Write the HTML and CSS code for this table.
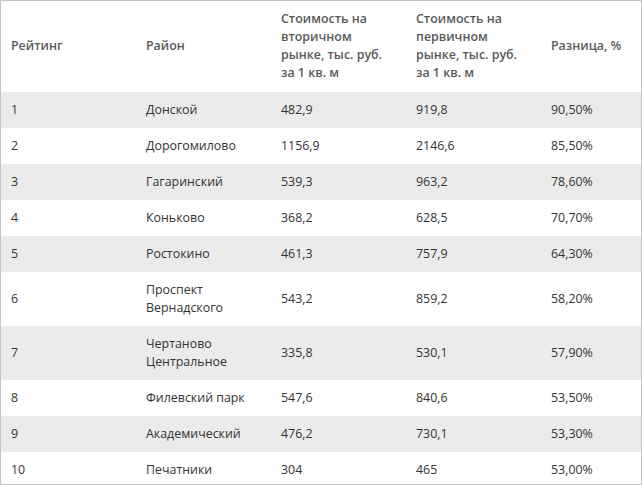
FILE: index.html
```html
<!DOCTYPE html>
<html lang="ru">
<head>
<meta charset="utf-8">
<link rel="stylesheet" href="styles.css">
</head>
<body>
<div class="frame">
<table class="rating">
<colgroup><col class="c"><col class="c"><col class="c"><col class="c"><col class="c"></colgroup>
<thead>
<tr><th>Рейтинг</th><th>Район</th><th>Стоимость на вторичном рынке, тыс. руб. за 1 кв. м</th><th>Стоимость на первичном рынке, тыс. руб. за 1 кв. м</th><th>Разница, %</th></tr>
</thead>
<tbody>
<tr><td>1</td><td>Донской</td><td>482,9</td><td>919,8</td><td>90,50%</td></tr>
<tr><td>2</td><td>Дорогомилово</td><td>1156,9</td><td>2146,6</td><td>85,50%</td></tr>
<tr><td>3</td><td>Гагаринский</td><td>539,3</td><td>963,2</td><td>78,60%</td></tr>
<tr><td>4</td><td>Коньково</td><td>368,2</td><td>628,5</td><td>70,70%</td></tr>
<tr><td>5</td><td>Ростокино</td><td>461,3</td><td>757,9</td><td>64,30%</td></tr>
<tr><td>6</td><td>Проспект Вернадского</td><td>543,2</td><td>859,2</td><td>58,20%</td></tr>
<tr><td>7</td><td>Чертаново Центральное</td><td>335,8</td><td>530,1</td><td>57,90%</td></tr>
<tr><td>8</td><td>Филевский парк</td><td>547,6</td><td>840,6</td><td>53,50%</td></tr>
<tr><td>9</td><td>Академический</td><td>476,2</td><td>730,1</td><td>53,30%</td></tr>
<tr><td>10</td><td>Печатники</td><td>304</td><td>465</td><td>53,00%</td></tr>
</tbody>
</table>
</div>
</body>
</html>
```
FILE: styles.css
```css
html, body {
  margin: 0;
  padding: 0;
  background: #fff;
}
.frame {
  box-sizing: border-box;
  width: 642px;
  height: 485px;
  border: 1px solid #c4c4c4;
  overflow: hidden;
}
.rating {
  border-collapse: collapse;
  table-layout: fixed;
  width: 675px;
  font-family: "Open Sans", "Noto Sans", sans-serif;
  font-size: 12.4px;
  line-height: 18px;
  color: #333;
}
.rating .c {
  width: 135px;
}
.rating th {
  text-align: left;
  vertical-align: middle;
  font-weight: 600;
  color: #5a5a5a;
  padding: 9px 20px 10px 10px;
}
.rating td {
  text-align: left;
  vertical-align: middle;
  padding: 9px 20px 9px 10px;
}
.rating tbody tr:nth-child(odd) {
  background: #ebebeb;
}
```
